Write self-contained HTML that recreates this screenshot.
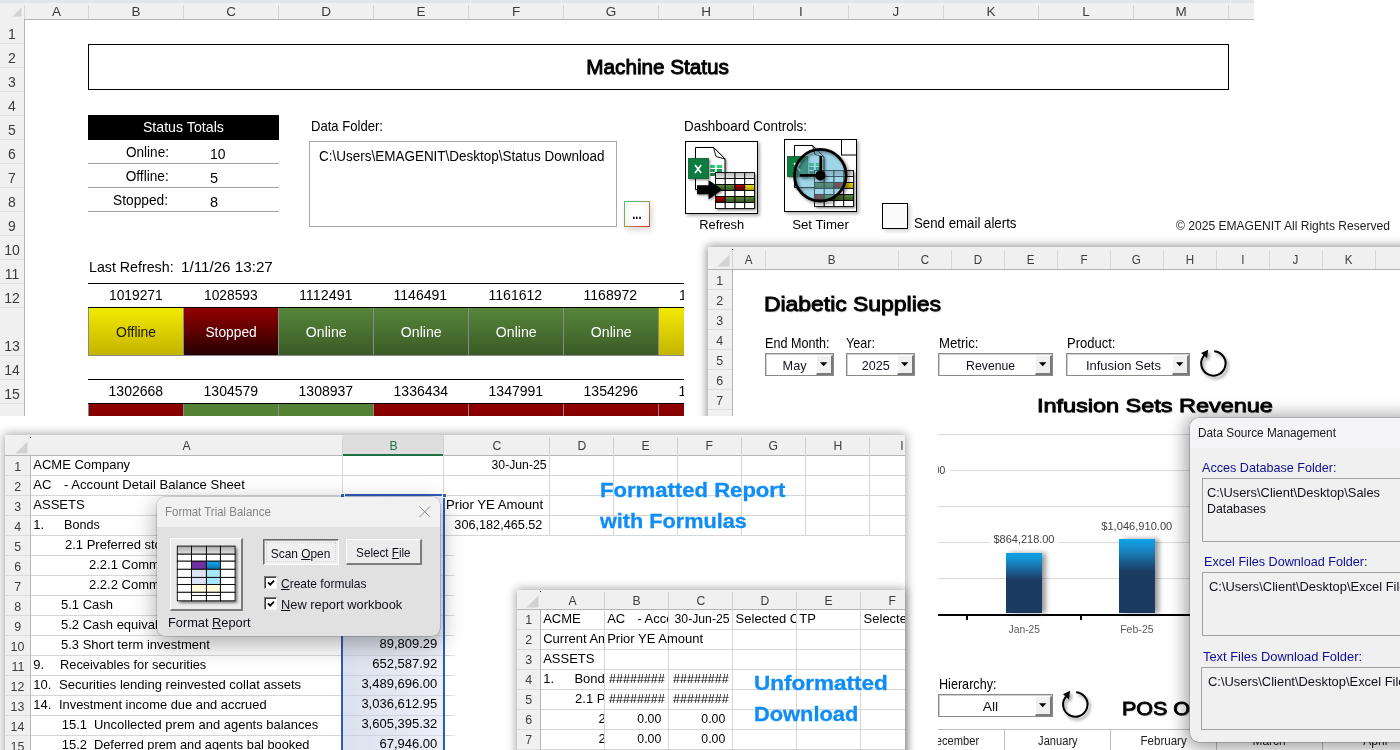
<!DOCTYPE html>
<html><head><meta charset="utf-8"><title>Excel Dashboards</title>
<style>
html,body{margin:0;padding:0;}
body{width:1400px;height:750px;overflow:hidden;background:#fff;position:relative;font-family:"Liberation Sans",sans-serif;}
.r{position:absolute;box-sizing:border-box;}
.t{position:absolute;white-space:pre;font-family:"Liberation Sans",sans-serif;}
svg{position:absolute;overflow:visible;}
</style></head><body>
<!-- p1 -->
<div class="r" style="left:0px;top:0px;width:1400px;height:416px;overflow:hidden;background:#fff;">
<div class="r" style="left:0px;top:0px;width:1254px;height:3px;background:#e2e5e9;"></div>
<div class="r" style="left:0px;top:3px;width:1254px;height:17px;background:#f0f0f0;border-bottom:1px solid #b4b4b4;"></div>
<div class="r" style="left:0px;top:19px;width:25px;height:397px;background:#f0f0f0;border-right:1px solid #b4b4b4;"></div>
<svg style="left:12px;top:7px" width="10" height="10"><polygon points="9.5,0.5 9.5,9.5 0.5,9.5" fill="#d2d2d2"/></svg>
<div class="r" style="left:88px;top:5px;width:1px;height:14px;background:#d4d4d4;"></div>
<div class="t" style="left:52.00px;top:2.76px;height:18px;line-height:18px;font-size:13.5px;color:#3c3c3c;">A</div>
<div class="r" style="left:183px;top:5px;width:1px;height:14px;background:#d4d4d4;"></div>
<div class="t" style="left:131.50px;top:2.76px;height:18px;line-height:18px;font-size:13.5px;color:#3c3c3c;">B</div>
<div class="r" style="left:278px;top:5px;width:1px;height:14px;background:#d4d4d4;"></div>
<div class="t" style="left:226.13px;top:2.76px;height:18px;line-height:18px;font-size:13.5px;color:#3c3c3c;">C</div>
<div class="r" style="left:373px;top:5px;width:1px;height:14px;background:#d4d4d4;"></div>
<div class="t" style="left:321.13px;top:2.76px;height:18px;line-height:18px;font-size:13.5px;color:#3c3c3c;">D</div>
<div class="r" style="left:468px;top:5px;width:1px;height:14px;background:#d4d4d4;"></div>
<div class="t" style="left:416.50px;top:2.76px;height:18px;line-height:18px;font-size:13.5px;color:#3c3c3c;">E</div>
<div class="r" style="left:563px;top:5px;width:1px;height:14px;background:#d4d4d4;"></div>
<div class="t" style="left:511.88px;top:2.76px;height:18px;line-height:18px;font-size:13.5px;color:#3c3c3c;">F</div>
<div class="r" style="left:658px;top:5px;width:1px;height:14px;background:#d4d4d4;"></div>
<div class="t" style="left:605.75px;top:2.76px;height:18px;line-height:18px;font-size:13.5px;color:#3c3c3c;">G</div>
<div class="r" style="left:753px;top:5px;width:1px;height:14px;background:#d4d4d4;"></div>
<div class="t" style="left:701.13px;top:2.76px;height:18px;line-height:18px;font-size:13.5px;color:#3c3c3c;">H</div>
<div class="r" style="left:848px;top:5px;width:1px;height:14px;background:#d4d4d4;"></div>
<div class="t" style="left:799.12px;top:2.76px;height:18px;line-height:18px;font-size:13.5px;color:#3c3c3c;">I</div>
<div class="r" style="left:943px;top:5px;width:1px;height:14px;background:#d4d4d4;"></div>
<div class="t" style="left:892.62px;top:2.76px;height:18px;line-height:18px;font-size:13.5px;color:#3c3c3c;">J</div>
<div class="r" style="left:1038px;top:5px;width:1px;height:14px;background:#d4d4d4;"></div>
<div class="t" style="left:986.50px;top:2.76px;height:18px;line-height:18px;font-size:13.5px;color:#3c3c3c;">K</div>
<div class="r" style="left:1133px;top:5px;width:1px;height:14px;background:#d4d4d4;"></div>
<div class="t" style="left:1082.25px;top:2.76px;height:18px;line-height:18px;font-size:13.5px;color:#3c3c3c;">L</div>
<div class="r" style="left:1228px;top:5px;width:1px;height:14px;background:#d4d4d4;"></div>
<div class="t" style="left:1175.38px;top:2.76px;height:18px;line-height:18px;font-size:13.5px;color:#3c3c3c;">M</div>
<div class="r" style="left:24px;top:5px;width:1px;height:14px;background:#d4d4d4;"></div>
<div class="r" style="left:0px;top:43px;width:24px;height:1px;background:#dcdcdc;"></div>
<div class="t" style="left:8.11px;top:24.66px;height:18px;line-height:18px;font-size:14px;color:#3c3c3c;">1</div>
<div class="r" style="left:0px;top:67px;width:24px;height:1px;background:#dcdcdc;"></div>
<div class="t" style="left:8.11px;top:48.66px;height:18px;line-height:18px;font-size:14px;color:#3c3c3c;">2</div>
<div class="r" style="left:0px;top:91px;width:24px;height:1px;background:#dcdcdc;"></div>
<div class="t" style="left:8.11px;top:72.66px;height:18px;line-height:18px;font-size:14px;color:#3c3c3c;">3</div>
<div class="r" style="left:0px;top:115px;width:24px;height:1px;background:#dcdcdc;"></div>
<div class="t" style="left:8.11px;top:96.66px;height:18px;line-height:18px;font-size:14px;color:#3c3c3c;">4</div>
<div class="r" style="left:0px;top:139px;width:24px;height:1px;background:#dcdcdc;"></div>
<div class="t" style="left:8.11px;top:120.66px;height:18px;line-height:18px;font-size:14px;color:#3c3c3c;">5</div>
<div class="r" style="left:0px;top:163px;width:24px;height:1px;background:#dcdcdc;"></div>
<div class="t" style="left:8.11px;top:144.66px;height:18px;line-height:18px;font-size:14px;color:#3c3c3c;">6</div>
<div class="r" style="left:0px;top:187px;width:24px;height:1px;background:#dcdcdc;"></div>
<div class="t" style="left:8.11px;top:168.66px;height:18px;line-height:18px;font-size:14px;color:#3c3c3c;">7</div>
<div class="r" style="left:0px;top:211px;width:24px;height:1px;background:#dcdcdc;"></div>
<div class="t" style="left:8.11px;top:192.66px;height:18px;line-height:18px;font-size:14px;color:#3c3c3c;">8</div>
<div class="r" style="left:0px;top:235px;width:24px;height:1px;background:#dcdcdc;"></div>
<div class="t" style="left:8.11px;top:216.66px;height:18px;line-height:18px;font-size:14px;color:#3c3c3c;">9</div>
<div class="r" style="left:0px;top:259px;width:24px;height:1px;background:#dcdcdc;"></div>
<div class="t" style="left:4.21px;top:240.66px;height:18px;line-height:18px;font-size:14px;color:#3c3c3c;">10</div>
<div class="r" style="left:0px;top:283px;width:24px;height:1px;background:#dcdcdc;"></div>
<div class="t" style="left:4.73px;top:264.66px;height:18px;line-height:18px;font-size:14px;color:#3c3c3c;">11</div>
<div class="r" style="left:0px;top:307px;width:24px;height:1px;background:#dcdcdc;"></div>
<div class="t" style="left:4.21px;top:288.66px;height:18px;line-height:18px;font-size:14px;color:#3c3c3c;">12</div>
<div class="r" style="left:0px;top:355px;width:24px;height:1px;background:#dcdcdc;"></div>
<div class="t" style="left:4.21px;top:336.66px;height:18px;line-height:18px;font-size:14px;color:#3c3c3c;">13</div>
<div class="r" style="left:0px;top:379px;width:24px;height:1px;background:#dcdcdc;"></div>
<div class="t" style="left:4.21px;top:360.66px;height:18px;line-height:18px;font-size:14px;color:#3c3c3c;">14</div>
<div class="r" style="left:0px;top:403px;width:24px;height:1px;background:#dcdcdc;"></div>
<div class="t" style="left:4.21px;top:384.66px;height:18px;line-height:18px;font-size:14px;color:#3c3c3c;">15</div>
<div class="r" style="left:88px;top:44px;width:1141px;height:46px;border:1px solid #000;"></div>
<div class="t" style="left:587.15px;top:53.44px;height:27px;line-height:27px;font-size:20.5px;color:#000;transform:scaleX(1.0092);transform-origin:50% 50%;-webkit-text-stroke:0.9px #000;text-shadow:0.5px 0.5px 1px rgba(0,0,0,.35);">Machine Status</div>
<div class="r" style="left:88px;top:115px;width:191px;height:25px;background:#000;"></div>
<div class="t" style="left:141.62px;top:117.67px;height:19px;line-height:19px;font-size:14.5px;color:#fff;transform:scaleX(0.9788);transform-origin:50% 50%;">Status Totals</div>
<div class="t" style="left:122.56px;top:142.67px;height:19px;line-height:19px;font-size:14.5px;color:#000;transform:scaleX(0.9359);transform-origin:100% 50%;">Online:</div>
<div class="t" style="left:210.00px;top:144.97px;height:19px;line-height:19px;font-size:14.5px;color:#000;transform:scaleX(0.9610);transform-origin:0 50%;">10</div>
<div class="r" style="left:88px;top:163px;width:191px;height:1px;background:#a0a0a0;"></div>
<div class="t" style="left:122.83px;top:166.67px;height:19px;line-height:19px;font-size:14.5px;color:#000;transform:scaleX(0.9415);transform-origin:100% 50%;">Offline:</div>
<div class="t" style="left:210.00px;top:168.97px;height:19px;line-height:19px;font-size:14.5px;color:#000;">5</div>
<div class="r" style="left:88px;top:187px;width:191px;height:1px;background:#a0a0a0;"></div>
<div class="t" style="left:110.45px;top:190.67px;height:19px;line-height:19px;font-size:14.5px;color:#000;transform:scaleX(0.9474);transform-origin:100% 50%;">Stopped:</div>
<div class="t" style="left:210.00px;top:192.97px;height:19px;line-height:19px;font-size:14.5px;color:#000;">8</div>
<div class="r" style="left:88px;top:211px;width:191px;height:1px;background:#a0a0a0;"></div>
<div class="t" style="left:311.00px;top:117.27px;height:19px;line-height:19px;font-size:14.5px;color:#000;transform:scaleX(0.9024);transform-origin:0 50%;">Data Folder:</div>
<div class="r" style="left:309px;top:141px;width:308px;height:86px;background:#fff;border:1px solid #a8a8a8;"></div>
<div class="t" style="left:319.00px;top:146.66px;height:18px;line-height:18px;font-size:14px;color:#000;transform:scaleX(0.9631);transform-origin:0 50%;">C:\Users\EMAGENIT\Desktop\Status Download</div>
<div class="r" style="left:624px;top:201px;width:26px;height:26px;background:#fbfbfb;box-shadow:2px 3px 6px rgba(0,0,0,.16);background:linear-gradient(135deg,#3ecb85,#a39646 50%,#d63434);"></div>
<div class="r" style="left:625px;top:202px;width:24px;height:24px;background:radial-gradient(ellipse at center,#fff 35%,#f1f1f1 100%);"></div>
<div class="t" style="left:630.87px;top:204.76px;height:18px;line-height:18px;font-size:14px;color:#000;font-weight:bold;transform:scaleX(.8);">...</div>
<div class="t" style="left:684.00px;top:117.27px;height:19px;line-height:19px;font-size:14.5px;color:#000;transform:scaleX(0.9249);transform-origin:0 50%;">Dashboard Controls:</div>
<div class="t" style="left:89.40px;top:257.17px;height:20px;line-height:20px;font-size:15px;color:#000;transform:scaleX(0.9483);transform-origin:0 50%;">Last Refresh:</div>
<div class="t" style="left:180.80px;top:257.17px;height:20px;line-height:20px;font-size:15px;color:#000;transform:scaleX(1.0128);transform-origin:0 50%;">1/11/26 13:27</div>
<div class="r" style="left:88px;top:283px;width:596px;height:1px;background:#000;"></div>
<div class="r" style="left:88px;top:307px;width:596px;height:1px;background:#000;"></div>
<div class="r" style="left:88px;top:379px;width:596px;height:1px;background:#000;"></div>
<div class="r" style="left:88px;top:403px;width:596px;height:1px;background:#000;"></div>
<div class="t" style="left:107.86px;top:286.16px;height:19px;line-height:19px;font-size:14.3px;color:#000;transform:scaleX(0.9628);transform-origin:50% 50%;">1019271</div>
<div class="t" style="left:107.86px;top:382.16px;height:19px;line-height:19px;font-size:14.3px;color:#000;transform:scaleX(0.9807);transform-origin:50% 50%;">1302668</div>
<div class="r" style="left:88px;top:308px;width:95px;height:48px;background:linear-gradient(#f2ea00,#c4b400);border-left:1px solid #8a8a8a;border-bottom:1px solid #8a8a8a;"></div>
<div class="t" style="left:116.20px;top:323.16px;height:18px;line-height:18px;font-size:14px;color:#1a1a00;transform:scaleX(0.9948);transform-origin:50% 50%;">Offline</div>
<div class="r" style="left:88px;top:404px;width:95px;height:12px;background:linear-gradient(#8f0000,#850000);border-left:1px solid #8a8a8a;"></div>
<div class="t" style="left:202.86px;top:286.16px;height:19px;line-height:19px;font-size:14.3px;color:#000;transform:scaleX(0.9628);transform-origin:50% 50%;">1028593</div>
<div class="t" style="left:202.86px;top:382.16px;height:19px;line-height:19px;font-size:14.3px;color:#000;transform:scaleX(0.9807);transform-origin:50% 50%;">1304579</div>
<div class="r" style="left:183px;top:308px;width:95px;height:48px;background:linear-gradient(#8c0000 0%,#8c0000 8%,#260000 100%);border-left:1px solid #8a8a8a;border-bottom:1px solid #8a8a8a;"></div>
<div class="t" style="left:205.22px;top:323.16px;height:18px;line-height:18px;font-size:14px;color:#fff;transform:scaleX(0.9854);transform-origin:50% 50%;">Stopped</div>
<div class="r" style="left:183px;top:404px;width:95px;height:12px;background:#548235;border-left:1px solid #8a8a8a;"></div>
<div class="t" style="left:298.92px;top:286.16px;height:19px;line-height:19px;font-size:14.3px;color:#000;transform:scaleX(1.0009);transform-origin:50% 50%;">1112491</div>
<div class="t" style="left:297.86px;top:382.16px;height:19px;line-height:19px;font-size:14.3px;color:#000;transform:scaleX(0.9807);transform-origin:50% 50%;">1308937</div>
<div class="r" style="left:278px;top:308px;width:95px;height:48px;background:linear-gradient(#56863a,#3b5a27);border-left:1px solid #8a8a8a;border-bottom:1px solid #8a8a8a;"></div>
<div class="t" style="left:306.07px;top:323.16px;height:18px;line-height:18px;font-size:14px;color:#fff;transform:scaleX(1.0082);transform-origin:50% 50%;">Online</div>
<div class="r" style="left:278px;top:404px;width:95px;height:12px;background:#548235;border-left:1px solid #8a8a8a;"></div>
<div class="t" style="left:393.39px;top:286.16px;height:19px;line-height:19px;font-size:14.3px;color:#000;transform:scaleX(0.9815);transform-origin:50% 50%;">1146491</div>
<div class="t" style="left:392.86px;top:382.16px;height:19px;line-height:19px;font-size:14.3px;color:#000;transform:scaleX(0.9807);transform-origin:50% 50%;">1336434</div>
<div class="r" style="left:373px;top:308px;width:95px;height:48px;background:linear-gradient(#56863a,#3b5a27);border-left:1px solid #8a8a8a;border-bottom:1px solid #8a8a8a;"></div>
<div class="t" style="left:401.07px;top:323.16px;height:18px;line-height:18px;font-size:14px;color:#fff;transform:scaleX(1.0082);transform-origin:50% 50%;">Online</div>
<div class="r" style="left:373px;top:404px;width:95px;height:12px;background:linear-gradient(#8f0000,#850000);border-left:1px solid #8a8a8a;"></div>
<div class="t" style="left:488.39px;top:286.16px;height:19px;line-height:19px;font-size:14.3px;color:#000;transform:scaleX(0.9815);transform-origin:50% 50%;">1161612</div>
<div class="t" style="left:487.86px;top:382.16px;height:19px;line-height:19px;font-size:14.3px;color:#000;transform:scaleX(0.9807);transform-origin:50% 50%;">1347991</div>
<div class="r" style="left:468px;top:308px;width:95px;height:48px;background:linear-gradient(#56863a,#3b5a27);border-left:1px solid #8a8a8a;border-bottom:1px solid #8a8a8a;"></div>
<div class="t" style="left:496.07px;top:323.16px;height:18px;line-height:18px;font-size:14px;color:#fff;transform:scaleX(1.0082);transform-origin:50% 50%;">Online</div>
<div class="r" style="left:468px;top:404px;width:95px;height:12px;background:linear-gradient(#8f0000,#850000);border-left:1px solid #8a8a8a;"></div>
<div class="t" style="left:583.39px;top:286.16px;height:19px;line-height:19px;font-size:14.3px;color:#000;transform:scaleX(0.9815);transform-origin:50% 50%;">1168972</div>
<div class="t" style="left:582.86px;top:382.16px;height:19px;line-height:19px;font-size:14.3px;color:#000;transform:scaleX(0.9807);transform-origin:50% 50%;">1354296</div>
<div class="r" style="left:563px;top:308px;width:95px;height:48px;background:linear-gradient(#56863a,#3b5a27);border-left:1px solid #8a8a8a;border-bottom:1px solid #8a8a8a;"></div>
<div class="t" style="left:591.07px;top:323.16px;height:18px;line-height:18px;font-size:14px;color:#fff;transform:scaleX(1.0082);transform-origin:50% 50%;">Online</div>
<div class="r" style="left:563px;top:404px;width:95px;height:12px;background:linear-gradient(#8f0000,#850000);border-left:1px solid #8a8a8a;"></div>
<div class="r" style="left:658px;top:284px;width:26px;height:23px;overflow:hidden;">
<div class="t" style="left:19.86px;top:2.16px;height:19px;line-height:19px;font-size:14.3px;color:#000;transform:scaleX(0.9628);transform-origin:50% 50%;">1019271</div>
</div>
<div class="r" style="left:658px;top:380px;width:26px;height:23px;overflow:hidden;">
<div class="t" style="left:19.86px;top:2.16px;height:19px;line-height:19px;font-size:14.3px;color:#000;transform:scaleX(0.9807);transform-origin:50% 50%;">1302668</div>
</div>
<div class="r" style="left:658px;top:308px;width:26px;height:48px;background:linear-gradient(#f2ea00,#c4b400);border-left:1px solid #8a8a8a;border-bottom:1px solid #8a8a8a;"></div>
<div class="r" style="left:658px;top:404px;width:26px;height:12px;background:linear-gradient(#8f0000,#850000);border-left:1px solid #8a8a8a;"></div>
<div class="r" style="left:685px;top:141px;width:73px;height:73px;background:#fff;border:1px solid #000;box-shadow:2px 2px 3px rgba(0,0,0,.3);"></div>
<svg style="left:685px;top:141px" width="73" height="73" viewBox="0 0 73 73"><defs>
<filter id="sh1" x="-30%" y="-30%" width="170%" height="170%"><feDropShadow dx="1.2" dy="1.2" stdDeviation="1" flood-color="#000" flood-opacity="0.45"/></filter>
<filter id="sh2" x="-30%" y="-30%" width="170%" height="170%"><feDropShadow dx="1.5" dy="1.5" stdDeviation="1.2" flood-color="#000" flood-opacity="0.55"/></filter>
<filter id="sh3" x="-30%" y="-30%" width="170%" height="170%"><feDropShadow dx="2" dy="2" stdDeviation="1.5" flood-color="#000" flood-opacity="0.45"/></filter>
<linearGradient id="gh" x1="0" y1="0" x2="0" y2="1"><stop offset="0" stop-color="#b8b8b8"/><stop offset="1" stop-color="#e8e8e8"/></linearGradient>
<linearGradient id="gg" x1="0" y1="0" x2="0" y2="1"><stop offset="0" stop-color="#5a8a3c"/><stop offset="1" stop-color="#34521f"/></linearGradient>
<linearGradient id="gr" x1="0" y1="0" x2="0" y2="1"><stop offset="0" stop-color="#c00000"/><stop offset="1" stop-color="#500000"/></linearGradient>
<linearGradient id="gy" x1="0" y1="0" x2="0" y2="1"><stop offset="0" stop-color="#f0e400"/><stop offset="1" stop-color="#a89a00"/></linearGradient>
<clipPath id="cb"><rect x="0.5" y="0.5" width="72" height="72"/></clipPath>
</defs><path d="M10.5 6.5 H28.5 L40 18 V48.5 H10.5 Z" fill="#fff" stroke="#000" stroke-width="1" filter="url(#sh1)"/><path d="M28.5 6.5 L31 15.5 L40 18 Z" fill="#fff" stroke="#000" stroke-width="0.9" stroke-linejoin="round"/><rect x="25.3" y="24.0" width="4.6" height="3" fill="#21c872"/><rect x="31.8" y="24.0" width="5.2" height="3" fill="#27d07a"/><rect x="25.3" y="28.0" width="4.6" height="3" fill="#159a55"/><rect x="31.8" y="28.0" width="5.2" height="3" fill="#159a55"/><rect x="25.3" y="32.0" width="4.6" height="3" fill="#0f7a42"/><rect x="31.8" y="32.0" width="5.2" height="3" fill="#0f7a42"/><rect x="3.5" y="17.5" width="20" height="20" fill="#107c41" stroke="#0b5a2f" stroke-width="0.8" filter="url(#sh1)"/><path d="M10 24 L16.2 32 M16.2 24 L10 32" stroke="#fff" stroke-width="1.7" fill="none"/><rect x="30.5" y="31.5" width="39.0" height="36.0" fill="#fff" filter="url(#sh2)"/><rect x="30.50" y="31.50" width="9.75" height="6.0" fill="url(#gh)" stroke="#000" stroke-width="0.9"/><rect x="40.25" y="31.50" width="9.75" height="6.0" fill="url(#gh)" stroke="#000" stroke-width="0.9"/><rect x="50.00" y="31.50" width="9.75" height="6.0" fill="url(#gh)" stroke="#000" stroke-width="0.9"/><rect x="59.75" y="31.50" width="9.75" height="6.0" fill="url(#gh)" stroke="#000" stroke-width="0.9"/><rect x="30.50" y="37.50" width="9.75" height="6.0" fill="#fff" stroke="#000" stroke-width="0.9"/><rect x="40.25" y="37.50" width="9.75" height="6.0" fill="#fff" stroke="#000" stroke-width="0.9"/><rect x="50.00" y="37.50" width="9.75" height="6.0" fill="#fff" stroke="#000" stroke-width="0.9"/><rect x="59.75" y="37.50" width="9.75" height="6.0" fill="#fff" stroke="#000" stroke-width="0.9"/><rect x="30.50" y="43.50" width="9.75" height="6.0" fill="url(#gg)" stroke="#000" stroke-width="0.9"/><rect x="40.25" y="43.50" width="9.75" height="6.0" fill="url(#gg)" stroke="#000" stroke-width="0.9"/><rect x="50.00" y="43.50" width="9.75" height="6.0" fill="url(#gr)" stroke="#000" stroke-width="0.9"/><rect x="59.75" y="43.50" width="9.75" height="6.0" fill="url(#gy)" stroke="#000" stroke-width="0.9"/><rect x="30.50" y="49.50" width="9.75" height="6.0" fill="#fff" stroke="#000" stroke-width="0.9"/><rect x="40.25" y="49.50" width="9.75" height="6.0" fill="#fff" stroke="#000" stroke-width="0.9"/><rect x="50.00" y="49.50" width="9.75" height="6.0" fill="#fff" stroke="#000" stroke-width="0.9"/><rect x="59.75" y="49.50" width="9.75" height="6.0" fill="#fff" stroke="#000" stroke-width="0.9"/><rect x="30.50" y="55.50" width="9.75" height="6.0" fill="url(#gr)" stroke="#000" stroke-width="0.9"/><rect x="40.25" y="55.50" width="9.75" height="6.0" fill="url(#gg)" stroke="#000" stroke-width="0.9"/><rect x="50.00" y="55.50" width="9.75" height="6.0" fill="url(#gg)" stroke="#000" stroke-width="0.9"/><rect x="59.75" y="55.50" width="9.75" height="6.0" fill="url(#gg)" stroke="#000" stroke-width="0.9"/><rect x="30.50" y="61.50" width="9.75" height="6.0" fill="#fff" stroke="#000" stroke-width="0.9"/><rect x="40.25" y="61.50" width="9.75" height="6.0" fill="#fff" stroke="#000" stroke-width="0.9"/><rect x="50.00" y="61.50" width="9.75" height="6.0" fill="#fff" stroke="#000" stroke-width="0.9"/><rect x="59.75" y="61.50" width="9.75" height="6.0" fill="#fff" stroke="#000" stroke-width="0.9"/><path d="M12 44.3 H23.5 V39 L37.2 48.7 L23.5 58.4 V53.2 H12 Z" fill="#000" filter="url(#sh1)"/></svg>
<div class="t" style="left:700.09px;top:216.54px;height:16px;line-height:16px;font-size:12.4px;color:#000;transform:scaleX(1.0364);transform-origin:50% 50%;">Refresh</div>
<div class="r" style="left:784px;top:139px;width:73px;height:73px;background:#fff;border:1px solid #000;box-shadow:2px 2px 3px rgba(0,0,0,.3);"></div>
<svg style="left:784px;top:139px" width="73" height="73" viewBox="0 0 73 73"><g clip-path="url(#cb)"><path d="M10.5 6.5 H28.5 L40 18 V48.5 H10.5 Z" fill="#fff" stroke="#000" stroke-width="1" filter="url(#sh1)"/><path d="M28.5 6.5 L31 15.5 L40 18 Z" fill="#fff" stroke="#000" stroke-width="0.9" stroke-linejoin="round"/><rect x="25.3" y="24.0" width="4.6" height="3" fill="#21c872"/><rect x="31.8" y="24.0" width="5.2" height="3" fill="#27d07a"/><rect x="25.3" y="28.0" width="4.6" height="3" fill="#159a55"/><rect x="31.8" y="28.0" width="5.2" height="3" fill="#159a55"/><rect x="25.3" y="32.0" width="4.6" height="3" fill="#0f7a42"/><rect x="31.8" y="32.0" width="5.2" height="3" fill="#0f7a42"/><rect x="3.5" y="17.5" width="20" height="20" fill="#107c41" stroke="#0b5a2f" stroke-width="0.8" filter="url(#sh1)"/><path d="M10 24 L16.2 32 M16.2 24 L10 32" stroke="#fff" stroke-width="1.7" fill="none"/><rect x="30.5" y="31.5" width="39.0" height="36.0" fill="#fff" filter="url(#sh2)"/><rect x="30.50" y="31.50" width="9.75" height="6.0" fill="url(#gh)" stroke="#000" stroke-width="0.9"/><rect x="40.25" y="31.50" width="9.75" height="6.0" fill="url(#gh)" stroke="#000" stroke-width="0.9"/><rect x="50.00" y="31.50" width="9.75" height="6.0" fill="url(#gh)" stroke="#000" stroke-width="0.9"/><rect x="59.75" y="31.50" width="9.75" height="6.0" fill="url(#gh)" stroke="#000" stroke-width="0.9"/><rect x="30.50" y="37.50" width="9.75" height="6.0" fill="#fff" stroke="#000" stroke-width="0.9"/><rect x="40.25" y="37.50" width="9.75" height="6.0" fill="#fff" stroke="#000" stroke-width="0.9"/><rect x="50.00" y="37.50" width="9.75" height="6.0" fill="#fff" stroke="#000" stroke-width="0.9"/><rect x="59.75" y="37.50" width="9.75" height="6.0" fill="#fff" stroke="#000" stroke-width="0.9"/><rect x="30.50" y="43.50" width="9.75" height="6.0" fill="url(#gg)" stroke="#000" stroke-width="0.9"/><rect x="40.25" y="43.50" width="9.75" height="6.0" fill="url(#gg)" stroke="#000" stroke-width="0.9"/><rect x="50.00" y="43.50" width="9.75" height="6.0" fill="url(#gr)" stroke="#000" stroke-width="0.9"/><rect x="59.75" y="43.50" width="9.75" height="6.0" fill="url(#gy)" stroke="#000" stroke-width="0.9"/><rect x="30.50" y="49.50" width="9.75" height="6.0" fill="#fff" stroke="#000" stroke-width="0.9"/><rect x="40.25" y="49.50" width="9.75" height="6.0" fill="#fff" stroke="#000" stroke-width="0.9"/><rect x="50.00" y="49.50" width="9.75" height="6.0" fill="#fff" stroke="#000" stroke-width="0.9"/><rect x="59.75" y="49.50" width="9.75" height="6.0" fill="#fff" stroke="#000" stroke-width="0.9"/><rect x="30.50" y="55.50" width="9.75" height="6.0" fill="url(#gr)" stroke="#000" stroke-width="0.9"/><rect x="40.25" y="55.50" width="9.75" height="6.0" fill="url(#gg)" stroke="#000" stroke-width="0.9"/><rect x="50.00" y="55.50" width="9.75" height="6.0" fill="url(#gg)" stroke="#000" stroke-width="0.9"/><rect x="59.75" y="55.50" width="9.75" height="6.0" fill="url(#gg)" stroke="#000" stroke-width="0.9"/><rect x="30.50" y="61.50" width="9.75" height="6.0" fill="#fff" stroke="#000" stroke-width="0.9"/><rect x="40.25" y="61.50" width="9.75" height="6.0" fill="#fff" stroke="#000" stroke-width="0.9"/><rect x="50.00" y="61.50" width="9.75" height="6.0" fill="#fff" stroke="#000" stroke-width="0.9"/><rect x="59.75" y="61.50" width="9.75" height="6.0" fill="#fff" stroke="#000" stroke-width="0.9"/></g><circle cx="36.3" cy="36.2" r="25.8" fill="#b4deee" style="mix-blend-mode:multiply"/><circle cx="36.3" cy="36.2" r="25.8" fill="rgba(130,200,225,0.42)"/>
<g filter="url(#sh3)"><circle cx="36.3" cy="36.2" r="25.8" fill="none" stroke="#000" stroke-width="2.8"/>
<path d="M36.7 36.4 V17 M36.4 36.4 H15.7" stroke="#000" stroke-width="2.6" stroke-linecap="butt" fill="none"/>
<circle cx="36.4" cy="36.4" r="5" fill="#000"/></g><rect x="57.5" y="0.5" width="15" height="15.5" fill="#fff" stroke="#000" stroke-width="1"/></svg>
<div class="t" style="left:793.97px;top:216.54px;height:16px;line-height:16px;font-size:12.4px;color:#000;transform:scaleX(1.0705);transform-origin:50% 50%;">Set Timer</div>
<div class="r" style="left:882px;top:203px;width:26px;height:26px;background:#fafafa;border:1px solid #000;box-shadow:2px 2px 4px rgba(0,0,0,.2);"></div>
<div class="t" style="left:914.30px;top:213.86px;height:19px;line-height:19px;font-size:14.3px;color:#000;transform:scaleX(0.9277);transform-origin:0 50%;">Send email alerts</div>
<div class="t" style="left:1176.00px;top:217.64px;height:16px;line-height:16px;font-size:12.3px;color:#1c1c1c;transform:scaleX(0.9815);transform-origin:0 50%;">© 2025 EMAGENIT All Rights Reserved</div>
<!-- p2 -->
<div class="r" style="left:708px;top:247px;width:700px;height:180px;background:#fff;box-shadow:0 0 9px 1px rgba(0,0,0,.45);">
<div class="r" style="left:0px;top:0px;width:700px;height:23px;background:#f0f0f0;border-bottom:1px solid #b4b4b4;"></div>
<div class="r" style="left:0px;top:23px;width:25px;height:160px;background:#f0f0f0;border-right:1px solid #b4b4b4;"></div>
<svg style="left:9px;top:7px" width="13" height="13"><polygon points="12.5,0.5 12.5,12.5 0.5,12.5" fill="#d2d2d2"/></svg>
<div class="r" style="left:24px;top:2px;width:1px;height:1px;background:#000;"></div>
<div class="r" style="left:24px;top:3px;width:1px;height:19px;background:#d4d4d4;"></div>
<div class="r" style="left:57px;top:3px;width:1px;height:19px;background:#d8d8d8;"></div>
<div class="t" style="left:35.70px;top:4.36px;height:18px;line-height:18px;font-size:13.5px;color:#3c3c3c;transform:scaleX(.86);">A</div>
<div class="r" style="left:190px;top:3px;width:1px;height:19px;background:#d8d8d8;"></div>
<div class="t" style="left:118.95px;top:4.36px;height:18px;line-height:18px;font-size:13.5px;color:#3c3c3c;transform:scaleX(.86);">B</div>
<div class="r" style="left:243px;top:3px;width:1px;height:19px;background:#d8d8d8;"></div>
<div class="t" style="left:211.83px;top:4.36px;height:18px;line-height:18px;font-size:13.5px;color:#3c3c3c;transform:scaleX(.86);">C</div>
<div class="r" style="left:296px;top:3px;width:1px;height:19px;background:#d8d8d8;"></div>
<div class="t" style="left:264.83px;top:4.36px;height:18px;line-height:18px;font-size:13.5px;color:#3c3c3c;transform:scaleX(.86);">D</div>
<div class="r" style="left:349px;top:3px;width:1px;height:19px;background:#d8d8d8;"></div>
<div class="t" style="left:318.20px;top:4.36px;height:18px;line-height:18px;font-size:13.5px;color:#3c3c3c;transform:scaleX(.86);">E</div>
<div class="r" style="left:402px;top:3px;width:1px;height:19px;background:#d8d8d8;"></div>
<div class="t" style="left:371.58px;top:4.36px;height:18px;line-height:18px;font-size:13.5px;color:#3c3c3c;transform:scaleX(.86);">F</div>
<div class="r" style="left:455px;top:3px;width:1px;height:19px;background:#d8d8d8;"></div>
<div class="t" style="left:423.45px;top:4.36px;height:18px;line-height:18px;font-size:13.5px;color:#3c3c3c;transform:scaleX(.86);">G</div>
<div class="r" style="left:508px;top:3px;width:1px;height:19px;background:#d8d8d8;"></div>
<div class="t" style="left:476.83px;top:4.36px;height:18px;line-height:18px;font-size:13.5px;color:#3c3c3c;transform:scaleX(.86);">H</div>
<div class="r" style="left:561px;top:3px;width:1px;height:19px;background:#d8d8d8;"></div>
<div class="t" style="left:532.82px;top:4.36px;height:18px;line-height:18px;font-size:13.5px;color:#3c3c3c;transform:scaleX(.86);">I</div>
<div class="r" style="left:614px;top:3px;width:1px;height:19px;background:#d8d8d8;"></div>
<div class="t" style="left:584.33px;top:4.36px;height:18px;line-height:18px;font-size:13.5px;color:#3c3c3c;transform:scaleX(.86);">J</div>
<div class="r" style="left:667px;top:3px;width:1px;height:19px;background:#d8d8d8;"></div>
<div class="t" style="left:636.20px;top:4.36px;height:18px;line-height:18px;font-size:13.5px;color:#3c3c3c;transform:scaleX(.86);">K</div>
<div class="r" style="left:0px;top:42px;width:24px;height:1px;background:#dcdcdc;"></div>
<div class="t" style="left:7.75px;top:24.96px;height:18px;line-height:18px;font-size:13.5px;color:#3c3c3c;transform:scaleX(.92);">1</div>
<div class="r" style="left:0px;top:62px;width:24px;height:1px;background:#dcdcdc;"></div>
<div class="t" style="left:7.75px;top:44.96px;height:18px;line-height:18px;font-size:13.5px;color:#3c3c3c;transform:scaleX(.92);">2</div>
<div class="r" style="left:0px;top:82px;width:24px;height:1px;background:#dcdcdc;"></div>
<div class="t" style="left:7.75px;top:64.96px;height:18px;line-height:18px;font-size:13.5px;color:#3c3c3c;transform:scaleX(.92);">3</div>
<div class="r" style="left:0px;top:102px;width:24px;height:1px;background:#dcdcdc;"></div>
<div class="t" style="left:7.75px;top:84.96px;height:18px;line-height:18px;font-size:13.5px;color:#3c3c3c;transform:scaleX(.92);">4</div>
<div class="r" style="left:0px;top:122px;width:24px;height:1px;background:#dcdcdc;"></div>
<div class="t" style="left:7.75px;top:104.96px;height:18px;line-height:18px;font-size:13.5px;color:#3c3c3c;transform:scaleX(.92);">5</div>
<div class="r" style="left:0px;top:142px;width:24px;height:1px;background:#dcdcdc;"></div>
<div class="t" style="left:7.75px;top:124.96px;height:18px;line-height:18px;font-size:13.5px;color:#3c3c3c;transform:scaleX(.92);">6</div>
<div class="r" style="left:0px;top:162px;width:24px;height:1px;background:#dcdcdc;"></div>
<div class="t" style="left:7.75px;top:144.96px;height:18px;line-height:18px;font-size:13.5px;color:#3c3c3c;transform:scaleX(.92);">7</div>
<div class="r" style="left:0px;top:182px;width:24px;height:1px;background:#dcdcdc;"></div>
<div class="t" style="left:7.75px;top:164.96px;height:18px;line-height:18px;font-size:13.5px;color:#3c3c3c;transform:scaleX(.92);">8</div>
<div class="t" style="left:56.00px;top:44.73px;height:25px;line-height:25px;font-size:19.6px;color:#000;transform:scaleX(1.1687);transform-origin:0 50%;-webkit-text-stroke:0.8px #000;text-shadow:0.6px 0.6px 1px rgba(0,0,0,.45);">Diabetic Supplies</div>
<div class="t" style="left:57.30px;top:87.36px;height:18px;line-height:18px;font-size:14.2px;color:#000;transform:scaleX(0.8881);transform-origin:0 50%;">End Month:</div>
<div class="t" style="left:137.60px;top:87.36px;height:18px;line-height:18px;font-size:14.2px;color:#000;transform:scaleX(0.8885);transform-origin:0 50%;">Year:</div>
<div class="t" style="left:230.50px;top:87.36px;height:18px;line-height:18px;font-size:14.2px;color:#000;transform:scaleX(0.9272);transform-origin:0 50%;">Metric:</div>
<div class="t" style="left:358.60px;top:87.36px;height:18px;line-height:18px;font-size:14.2px;color:#000;transform:scaleX(0.9171);transform-origin:0 50%;">Product:</div>
<div class="r" style="left:57px;top:106px;width:69px;height:23px;background:#fff;border:1px solid #8a8a8a;box-shadow:inset 1px 1px 0 #d0d0d0;"></div>
<div class="r" style="left:108px;top:108px;width:17px;height:20px;background:#f0f0f0;border-top:1px solid #fff;border-left:1px solid #fff;border-right:2px solid #7a7a7a;border-bottom:2px solid #7a7a7a;"></div>
<svg style="left:112.0px;top:115.0px" width="8" height="5"><polygon points="0,0.3 7.4,0.3 3.7,4.3" fill="#000"/></svg>
<div class="t" style="left:73.64px;top:110.05px;height:17px;line-height:17px;font-size:13.3px;color:#101020;transform:scaleX(0.9552);transform-origin:50% 50%;">May</div>
<div class="r" style="left:138px;top:106px;width:69px;height:23px;background:#fff;border:1px solid #8a8a8a;box-shadow:inset 1px 1px 0 #d0d0d0;"></div>
<div class="r" style="left:189px;top:108px;width:17px;height:20px;background:#f0f0f0;border-top:1px solid #fff;border-left:1px solid #fff;border-right:2px solid #7a7a7a;border-bottom:2px solid #7a7a7a;"></div>
<svg style="left:193.0px;top:115.0px" width="8" height="5"><polygon points="0,0.3 7.4,0.3 3.7,4.3" fill="#000"/></svg>
<div class="t" style="left:153.21px;top:110.05px;height:17px;line-height:17px;font-size:13.3px;color:#101020;transform:scaleX(0.9463);transform-origin:50% 50%;">2025</div>
<div class="r" style="left:230px;top:106px;width:115px;height:23px;background:#fff;border:1px solid #8a8a8a;box-shadow:inset 1px 1px 0 #d0d0d0;"></div>
<div class="r" style="left:327px;top:108px;width:17px;height:20px;background:#f0f0f0;border-top:1px solid #fff;border-left:1px solid #fff;border-right:2px solid #7a7a7a;border-bottom:2px solid #7a7a7a;"></div>
<svg style="left:331.0px;top:115.0px" width="8" height="5"><polygon points="0,0.3 7.4,0.3 3.7,4.3" fill="#000"/></svg>
<div class="t" style="left:255.88px;top:110.05px;height:17px;line-height:17px;font-size:13.3px;color:#101020;transform:scaleX(0.9204);transform-origin:50% 50%;">Revenue</div>
<div class="r" style="left:358px;top:106px;width:124px;height:23px;background:#fff;border:1px solid #8a8a8a;box-shadow:inset 1px 1px 0 #d0d0d0;"></div>
<div class="r" style="left:464px;top:108px;width:17px;height:20px;background:#f0f0f0;border-top:1px solid #fff;border-left:1px solid #fff;border-right:2px solid #7a7a7a;border-bottom:2px solid #7a7a7a;"></div>
<svg style="left:468.0px;top:115.0px" width="8" height="5"><polygon points="0,0.3 7.4,0.3 3.7,4.3" fill="#000"/></svg>
<div class="t" style="left:376.55px;top:110.05px;height:17px;line-height:17px;font-size:13.3px;color:#101020;transform:scaleX(0.9754);transform-origin:50% 50%;">Infusion Sets</div>
<svg style="left:0;top:0" width="10" height="10"><g filter="url(#shc)"><path d="M506.25 104.23 A12.2 12.2 0 1 1 496.93 107.62" fill="none" stroke="#000" stroke-width="2.0"/><polygon points="493.07,106.05 499.04,111.06 500.22,102.66" fill="#000"/></g><defs><filter id="shc" x="-40%" y="-40%" width="200%" height="200%"><feDropShadow dx="2" dy="2.5" stdDeviation="1.6" flood-color="#000" flood-opacity="0.4"/></filter></defs></svg>
<div class="t" style="left:329.00px;top:147.21px;height:24px;line-height:24px;font-size:18.2px;color:#000;transform:scaleX(1.2887);transform-origin:0 50%;-webkit-text-stroke:0.8px #000;text-shadow:0.6px 0.6px 1px rgba(0,0,0,.45);">Infusion Sets Revenue</div>
</div>
</div>
<!-- p3 -->
<div class="r" style="left:5px;top:435px;width:900px;height:330px;background:#fff;box-shadow:0 0 9px 1px rgba(0,0,0,.36);overflow:hidden;">
<div class="r" style="left:0px;top:0px;width:900px;height:21px;background:#f0f0f0;border-bottom:1px solid #b4b4b4;"></div>
<div class="r" style="left:0px;top:21px;width:26px;height:320px;background:#f0f0f0;border-right:1px solid #b4b4b4;"></div>
<svg style="left:10px;top:6px" width="13" height="13"><polygon points="12.5,0.5 12.5,12.5 0.5,12.5" fill="#d2d2d2"/></svg>
<div class="r" style="left:25px;top:2px;width:1px;height:1px;background:#000;"></div>
<div class="r" style="left:338px;top:0px;width:101px;height:21px;background:#dedede;border-bottom:2px solid #1e7145;"></div>
<div class="t" style="left:177.00px;top:2.46px;height:18px;line-height:18px;font-size:13.5px;color:#3c3c3c;transform:scaleX(.9);">A</div>
<div class="r" style="left:337px;top:2px;width:1px;height:19px;background:#d0d0d0;"></div>
<div class="t" style="left:383.50px;top:2.46px;height:18px;line-height:18px;font-size:13.5px;color:#1e7145;transform:scaleX(.9);">B</div>
<div class="r" style="left:438px;top:2px;width:1px;height:19px;background:#d0d0d0;"></div>
<div class="t" style="left:486.63px;top:2.46px;height:18px;line-height:18px;font-size:13.5px;color:#3c3c3c;transform:scaleX(.9);">C</div>
<div class="r" style="left:544px;top:2px;width:1px;height:19px;background:#d0d0d0;"></div>
<div class="t" style="left:571.63px;top:2.46px;height:18px;line-height:18px;font-size:13.5px;color:#3c3c3c;transform:scaleX(.9);">D</div>
<div class="r" style="left:608px;top:2px;width:1px;height:19px;background:#d0d0d0;"></div>
<div class="t" style="left:636.00px;top:2.46px;height:18px;line-height:18px;font-size:13.5px;color:#3c3c3c;transform:scaleX(.9);">E</div>
<div class="r" style="left:672px;top:2px;width:1px;height:19px;background:#d0d0d0;"></div>
<div class="t" style="left:700.38px;top:2.46px;height:18px;line-height:18px;font-size:13.5px;color:#3c3c3c;transform:scaleX(.9);">F</div>
<div class="r" style="left:736px;top:2px;width:1px;height:19px;background:#d0d0d0;"></div>
<div class="t" style="left:763.25px;top:2.46px;height:18px;line-height:18px;font-size:13.5px;color:#3c3c3c;transform:scaleX(.9);">G</div>
<div class="r" style="left:800px;top:2px;width:1px;height:19px;background:#d0d0d0;"></div>
<div class="t" style="left:827.63px;top:2.46px;height:18px;line-height:18px;font-size:13.5px;color:#3c3c3c;transform:scaleX(.9);">H</div>
<div class="r" style="left:864px;top:2px;width:1px;height:19px;background:#d0d0d0;"></div>
<div class="t" style="left:894.62px;top:2.46px;height:18px;line-height:18px;font-size:13.5px;color:#3c3c3c;transform:scaleX(.9);">I</div>
<div class="r" style="left:0px;top:40px;width:25px;height:1px;background:#dcdcdc;"></div>
<div class="t" style="left:9.25px;top:23.46px;height:18px;line-height:18px;font-size:13.5px;color:#3c3c3c;transform:scaleX(.92);">1</div>
<div class="r" style="left:26px;top:40px;width:413px;height:1px;background:#d6d6d6;"></div>
<div class="r" style="left:439px;top:40px;width:461px;height:1px;background:#d6d6d6;"></div>
<div class="r" style="left:0px;top:60px;width:25px;height:1px;background:#dcdcdc;"></div>
<div class="t" style="left:9.25px;top:43.46px;height:18px;line-height:18px;font-size:13.5px;color:#3c3c3c;transform:scaleX(.92);">2</div>
<div class="r" style="left:26px;top:60px;width:413px;height:1px;background:#d6d6d6;"></div>
<div class="r" style="left:439px;top:60px;width:461px;height:1px;background:#d6d6d6;"></div>
<div class="r" style="left:0px;top:80px;width:25px;height:1px;background:#dcdcdc;"></div>
<div class="t" style="left:9.25px;top:63.46px;height:18px;line-height:18px;font-size:13.5px;color:#3c3c3c;transform:scaleX(.92);">3</div>
<div class="r" style="left:26px;top:80px;width:413px;height:1px;background:#d6d6d6;"></div>
<div class="r" style="left:439px;top:80px;width:461px;height:1px;background:#d6d6d6;"></div>
<div class="r" style="left:0px;top:100px;width:25px;height:1px;background:#dcdcdc;"></div>
<div class="t" style="left:9.25px;top:83.46px;height:18px;line-height:18px;font-size:13.5px;color:#3c3c3c;transform:scaleX(.92);">4</div>
<div class="r" style="left:26px;top:100px;width:413px;height:1px;background:#d6d6d6;"></div>
<div class="r" style="left:439px;top:100px;width:461px;height:1px;background:#d6d6d6;"></div>
<div class="r" style="left:0px;top:120px;width:25px;height:1px;background:#dcdcdc;"></div>
<div class="t" style="left:9.25px;top:103.46px;height:18px;line-height:18px;font-size:13.5px;color:#3c3c3c;transform:scaleX(.92);">5</div>
<div class="r" style="left:26px;top:120px;width:413px;height:1px;background:#d6d6d6;"></div>
<div class="r" style="left:440px;top:120px;width:10px;height:1px;background:linear-gradient(90deg,#cfcfcf,#e8e8e8);"></div>
<div class="r" style="left:0px;top:140px;width:25px;height:1px;background:#dcdcdc;"></div>
<div class="t" style="left:9.25px;top:123.46px;height:18px;line-height:18px;font-size:13.5px;color:#3c3c3c;transform:scaleX(.92);">6</div>
<div class="r" style="left:26px;top:140px;width:413px;height:1px;background:#d6d6d6;"></div>
<div class="r" style="left:440px;top:140px;width:10px;height:1px;background:linear-gradient(90deg,#cfcfcf,#e8e8e8);"></div>
<div class="r" style="left:0px;top:160px;width:25px;height:1px;background:#dcdcdc;"></div>
<div class="t" style="left:9.25px;top:143.46px;height:18px;line-height:18px;font-size:13.5px;color:#3c3c3c;transform:scaleX(.92);">7</div>
<div class="r" style="left:26px;top:160px;width:413px;height:1px;background:#d6d6d6;"></div>
<div class="r" style="left:440px;top:160px;width:10px;height:1px;background:linear-gradient(90deg,#cfcfcf,#e8e8e8);"></div>
<div class="r" style="left:0px;top:180px;width:25px;height:1px;background:#dcdcdc;"></div>
<div class="t" style="left:9.25px;top:163.46px;height:18px;line-height:18px;font-size:13.5px;color:#3c3c3c;transform:scaleX(.92);">8</div>
<div class="r" style="left:26px;top:180px;width:413px;height:1px;background:#d6d6d6;"></div>
<div class="r" style="left:440px;top:180px;width:10px;height:1px;background:linear-gradient(90deg,#cfcfcf,#e8e8e8);"></div>
<div class="r" style="left:0px;top:200px;width:25px;height:1px;background:#dcdcdc;"></div>
<div class="t" style="left:9.25px;top:183.46px;height:18px;line-height:18px;font-size:13.5px;color:#3c3c3c;transform:scaleX(.92);">9</div>
<div class="r" style="left:26px;top:200px;width:413px;height:1px;background:#d6d6d6;"></div>
<div class="r" style="left:440px;top:200px;width:10px;height:1px;background:linear-gradient(90deg,#cfcfcf,#e8e8e8);"></div>
<div class="r" style="left:0px;top:220px;width:25px;height:1px;background:#dcdcdc;"></div>
<div class="t" style="left:5.49px;top:203.46px;height:18px;line-height:18px;font-size:13.5px;color:#3c3c3c;transform:scaleX(.92);">10</div>
<div class="r" style="left:26px;top:220px;width:413px;height:1px;background:#d6d6d6;"></div>
<div class="r" style="left:440px;top:220px;width:10px;height:1px;background:linear-gradient(90deg,#cfcfcf,#e8e8e8);"></div>
<div class="r" style="left:0px;top:240px;width:25px;height:1px;background:#dcdcdc;"></div>
<div class="t" style="left:5.99px;top:223.46px;height:18px;line-height:18px;font-size:13.5px;color:#3c3c3c;transform:scaleX(.92);">11</div>
<div class="r" style="left:26px;top:240px;width:413px;height:1px;background:#d6d6d6;"></div>
<div class="r" style="left:440px;top:240px;width:10px;height:1px;background:linear-gradient(90deg,#cfcfcf,#e8e8e8);"></div>
<div class="r" style="left:0px;top:260px;width:25px;height:1px;background:#dcdcdc;"></div>
<div class="t" style="left:5.49px;top:243.46px;height:18px;line-height:18px;font-size:13.5px;color:#3c3c3c;transform:scaleX(.92);">12</div>
<div class="r" style="left:26px;top:260px;width:413px;height:1px;background:#d6d6d6;"></div>
<div class="r" style="left:440px;top:260px;width:10px;height:1px;background:linear-gradient(90deg,#cfcfcf,#e8e8e8);"></div>
<div class="r" style="left:0px;top:280px;width:25px;height:1px;background:#dcdcdc;"></div>
<div class="t" style="left:5.49px;top:263.46px;height:18px;line-height:18px;font-size:13.5px;color:#3c3c3c;transform:scaleX(.92);">13</div>
<div class="r" style="left:26px;top:280px;width:413px;height:1px;background:#d6d6d6;"></div>
<div class="r" style="left:440px;top:280px;width:10px;height:1px;background:linear-gradient(90deg,#cfcfcf,#e8e8e8);"></div>
<div class="r" style="left:0px;top:300px;width:25px;height:1px;background:#dcdcdc;"></div>
<div class="t" style="left:5.49px;top:283.46px;height:18px;line-height:18px;font-size:13.5px;color:#3c3c3c;transform:scaleX(.92);">14</div>
<div class="r" style="left:26px;top:300px;width:413px;height:1px;background:#d6d6d6;"></div>
<div class="r" style="left:440px;top:300px;width:10px;height:1px;background:linear-gradient(90deg,#cfcfcf,#e8e8e8);"></div>
<div class="r" style="left:0px;top:320px;width:25px;height:1px;background:#dcdcdc;"></div>
<div class="t" style="left:5.49px;top:303.46px;height:18px;line-height:18px;font-size:13.5px;color:#3c3c3c;transform:scaleX(.92);">15</div>
<div class="r" style="left:26px;top:320px;width:413px;height:1px;background:#d6d6d6;"></div>
<div class="r" style="left:440px;top:320px;width:10px;height:1px;background:linear-gradient(90deg,#cfcfcf,#e8e8e8);"></div>
<div class="r" style="left:0px;top:340px;width:25px;height:1px;background:#dcdcdc;"></div>
<div class="t" style="left:5.49px;top:323.46px;height:18px;line-height:18px;font-size:13.5px;color:#3c3c3c;transform:scaleX(.92);">16</div>
<div class="r" style="left:26px;top:340px;width:413px;height:1px;background:#d6d6d6;"></div>
<div class="r" style="left:440px;top:340px;width:10px;height:1px;background:linear-gradient(90deg,#cfcfcf,#e8e8e8);"></div>
<div class="r" style="left:337px;top:20px;width:1px;height:300px;background:#d6d6d6;"></div>
<div class="r" style="left:438px;top:20px;width:1px;height:81px;background:#d6d6d6;"></div>
<div class="r" style="left:544px;top:20px;width:1px;height:81px;background:#d6d6d6;"></div>
<div class="r" style="left:608px;top:20px;width:1px;height:81px;background:#d6d6d6;"></div>
<div class="r" style="left:672px;top:20px;width:1px;height:81px;background:#d6d6d6;"></div>
<div class="r" style="left:736px;top:20px;width:1px;height:81px;background:#d6d6d6;"></div>
<div class="r" style="left:800px;top:20px;width:1px;height:81px;background:#d6d6d6;"></div>
<div class="r" style="left:864px;top:20px;width:1px;height:81px;background:#d6d6d6;"></div>
<div class="r" style="left:338px;top:61px;width:100px;height:260px;background:linear-gradient(90deg,rgba(190,200,225,.55),rgba(215,222,240,.45));"></div>
<div class="r" style="left:336px;top:59px;width:104px;height:2px;background:#2f5cb8;"></div>
<div class="r" style="left:336px;top:59px;width:2px;height:260px;background:#2f5cb8;"></div>
<div class="r" style="left:438px;top:59px;width:2px;height:260px;background:#2f5cb8;"></div>
<div class="r" style="left:334.5px;top:57.5px;width:5px;height:5px;background:#2f5cb8;border:0.5px solid #fff;"></div>
<div class="r" style="left:436.5px;top:57.5px;width:5px;height:5px;background:#2f5cb8;border:0.5px solid #fff;"></div>
<div class="t" style="left:28.30px;top:20.55px;height:18px;line-height:18px;font-size:13px;color:#000;">ACME Company</div>
<div class="t" style="left:28.30px;top:40.55px;height:18px;line-height:18px;font-size:13px;color:#000;">AC</div>
<div class="t" style="left:28.30px;top:60.55px;height:18px;line-height:18px;font-size:13px;color:#000;">ASSETS</div>
<div class="t" style="left:28.30px;top:80.55px;height:18px;line-height:18px;font-size:13px;color:#000;">1.</div>
<div class="t" style="left:60.00px;top:100.55px;height:18px;line-height:18px;font-size:13px;color:#000;">2.1 Preferred stock</div>
<div class="t" style="left:84.00px;top:120.55px;height:18px;line-height:18px;font-size:13px;color:#000;">2.2.1 Common</div>
<div class="t" style="left:84.00px;top:140.55px;height:18px;line-height:18px;font-size:13px;color:#000;">2.2.2 Common</div>
<div class="t" style="left:56.00px;top:160.55px;height:18px;line-height:18px;font-size:13px;color:#000;">5.1 Cash</div>
<div class="t" style="left:56.00px;top:180.55px;height:18px;line-height:18px;font-size:13px;color:#000;">5.2 Cash equivalents</div>
<div class="t" style="left:56.00px;top:200.55px;height:18px;line-height:18px;font-size:13px;color:#000;">5.3 Short term investment</div>
<div class="t" style="left:28.30px;top:220.55px;height:18px;line-height:18px;font-size:13px;color:#000;">9.</div>
<div class="t" style="left:28.30px;top:240.55px;height:18px;line-height:18px;font-size:13px;color:#000;">10.</div>
<div class="t" style="left:28.30px;top:260.55px;height:18px;line-height:18px;font-size:13px;color:#000;">14.</div>
<div class="t" style="left:56.80px;top:280.55px;height:18px;line-height:18px;font-size:13px;color:#000;">15.1</div>
<div class="t" style="left:56.80px;top:300.55px;height:18px;line-height:18px;font-size:13px;color:#000;">15.2</div>
<div class="t" style="left:59.40px;top:80.55px;height:18px;line-height:18px;font-size:13px;color:#000;transform:scaleX(0.9685);transform-origin:0 50%;">Bonds</div>
<div class="t" style="left:58.60px;top:40.55px;height:18px;line-height:18px;font-size:13px;color:#000;transform:scaleX(1.0088);transform-origin:0 50%;">- Account Detail Balance Sheet</div>
<div class="t" style="left:54.90px;top:220.55px;height:18px;line-height:18px;font-size:13px;color:#000;transform:scaleX(0.9877);transform-origin:0 50%;">Receivables for securities</div>
<div class="t" style="left:54.30px;top:240.55px;height:18px;line-height:18px;font-size:13px;color:#000;transform:scaleX(1.0031);transform-origin:0 50%;">Securities lending reinvested collat assets</div>
<div class="t" style="left:54.30px;top:260.55px;height:18px;line-height:18px;font-size:13px;color:#000;transform:scaleX(0.9906);transform-origin:0 50%;">Investment income due and accrued</div>
<div class="t" style="left:88.90px;top:280.55px;height:18px;line-height:18px;font-size:13px;color:#000;transform:scaleX(0.9975);transform-origin:0 50%;">Uncollected prem and agents balances</div>
<div class="t" style="left:88.90px;top:300.55px;height:18px;line-height:18px;font-size:13px;color:#000;transform:scaleX(0.9836);transform-origin:0 50%;">Deferred prem and agents bal booked</div>
<div class="t" style="left:374.47px;top:200.15px;height:18px;line-height:18px;font-size:13px;color:#000;">89,809.29</div>
<div class="t" style="left:367.24px;top:220.15px;height:18px;line-height:18px;font-size:13px;color:#000;">652,587.92</div>
<div class="t" style="left:356.39px;top:240.15px;height:18px;line-height:18px;font-size:13px;color:#000;">3,489,696.00</div>
<div class="t" style="left:356.39px;top:260.15px;height:18px;line-height:18px;font-size:13px;color:#000;">3,036,612.95</div>
<div class="t" style="left:356.39px;top:280.15px;height:18px;line-height:18px;font-size:13px;color:#000;">3,605,395.32</div>
<div class="t" style="left:374.47px;top:300.15px;height:18px;line-height:18px;font-size:13px;color:#000;">67,946.00</div>
<div class="t" style="left:482.86px;top:20.55px;height:18px;line-height:18px;font-size:13px;color:#000;transform:scaleX(0.9395);transform-origin:100% 50%;">30-Jun-25</div>
<div class="t" style="left:441.30px;top:60.55px;height:18px;line-height:18px;font-size:13px;color:#000;transform:scaleX(1.0129);transform-origin:0 50%;">Prior YE Amount</div>
<div class="t" style="left:446.93px;top:80.55px;height:18px;line-height:18px;font-size:13px;color:#000;transform:scaleX(0.9738);transform-origin:100% 50%;">306,182,465.52</div>
<div class="t" style="left:595.20px;top:42.13px;height:26px;line-height:26px;font-size:19.8px;color:#0f8df5;font-weight:bold;transform:scaleX(1.1167);transform-origin:0 50%;-webkit-text-stroke:0.3px #0f8df5;">Formatted Report</div>
<div class="t" style="left:595.20px;top:72.83px;height:26px;line-height:26px;font-size:19.8px;color:#0f8df5;font-weight:bold;transform:scaleX(1.0953);transform-origin:0 50%;-webkit-text-stroke:0.3px #0f8df5;">with Formulas</div>
</div>
<!-- p4 -->
<div class="r" style="left:157px;top:497px;width:283px;height:139px;background:#e1e1e1;border-radius:8px;box-shadow:0 7px 22px 2px rgba(0,0,0,.30),0 0 0 0.5px rgba(0,0,0,.28);overflow:hidden;">
<div class="r" style="left:0px;top:0px;width:283px;height:30px;background:#f1f1f1;"></div>
<div class="t" style="left:8.40px;top:6.84px;height:16px;line-height:16px;font-size:12.3px;color:#848484;transform:scaleX(0.9323);transform-origin:0 50%;">Format Trial Balance</div>
<svg style="left:261.5px;top:8.5px" width="12" height="12"><path d="M0.5 0.5 L11 11 M11 0.5 L0.5 11" stroke="#8a8a8a" stroke-width="1" fill="none"/></svg>
<div class="r" style="left:13px;top:41px;width:73px;height:73px;background:#ececec;border-top:1px solid #fff;border-left:1px solid #fff;border-right:2px solid #7c7c7c;border-bottom:2px solid #7c7c7c;"></div>
<svg style="left:0;top:0" width="283" height="139"><defs><filter id="sht" x="-30%" y="-30%" width="170%" height="170%"><feDropShadow dx="2" dy="2" stdDeviation="1.6" flood-color="#000" flood-opacity="0.55"/></filter><linearGradient id="th" x1="0" y1="0" x2="0" y2="1"><stop offset="0" stop-color="#a8a8a8"/><stop offset="1" stop-color="#e4e4e4"/></linearGradient><linearGradient id="tb" x1="0" y1="0" x2="0" y2="1"><stop offset="0" stop-color="#12aeee"/><stop offset="1" stop-color="#0a6cae"/></linearGradient></defs><rect x="20.30000000000001" y="49.10000000000002" width="57.8" height="54.7" fill="#fff" filter="url(#sht)"/><rect x="20.3" y="49.1" width="14.2" height="8.1" fill="url(#th)" stroke="#000" stroke-width="0.9"/><rect x="34.5" y="49.1" width="14.9" height="8.1" fill="url(#th)" stroke="#000" stroke-width="0.9"/><rect x="49.4" y="49.1" width="14.0" height="8.1" fill="url(#th)" stroke="#000" stroke-width="0.9"/><rect x="63.4" y="49.1" width="14.7" height="8.1" fill="url(#th)" stroke="#000" stroke-width="0.9"/><rect x="20.3" y="57.2" width="14.2" height="7.0" fill="#fff" stroke="#000" stroke-width="0.9"/><rect x="34.5" y="57.2" width="14.9" height="7.0" fill="#fff" stroke="#000" stroke-width="0.9"/><rect x="49.4" y="57.2" width="14.0" height="7.0" fill="#fff" stroke="#000" stroke-width="0.9"/><rect x="63.4" y="57.2" width="14.7" height="7.0" fill="#fff" stroke="#000" stroke-width="0.9"/><rect x="20.3" y="64.2" width="14.2" height="8.1" fill="#fff" stroke="#000" stroke-width="0.9"/><rect x="34.5" y="64.2" width="14.9" height="8.1" fill="#7030a0" stroke="#000" stroke-width="0.9"/><rect x="49.4" y="64.2" width="14.0" height="8.1" fill="url(#tb)" stroke="#000" stroke-width="0.9"/><rect x="63.4" y="64.2" width="14.7" height="8.1" fill="#fff" stroke="#000" stroke-width="0.9"/><rect x="20.3" y="72.3" width="14.2" height="8.1" fill="#fff" stroke="#000" stroke-width="0.9"/><rect x="34.5" y="72.3" width="14.9" height="8.1" fill="#dce3f4" stroke="#000" stroke-width="0.9"/><rect x="49.4" y="72.3" width="14.0" height="8.1" fill="#a6e6f8" stroke="#000" stroke-width="0.9"/><rect x="63.4" y="72.3" width="14.7" height="8.1" fill="#fff" stroke="#000" stroke-width="0.9"/><rect x="20.3" y="80.4" width="14.2" height="7.1" fill="#fff" stroke="#000" stroke-width="0.9"/><rect x="34.5" y="80.4" width="14.9" height="7.1" fill="#dce3f4" stroke="#000" stroke-width="0.9"/><rect x="49.4" y="80.4" width="14.0" height="7.1" fill="#a6e6f8" stroke="#000" stroke-width="0.9"/><rect x="63.4" y="80.4" width="14.7" height="7.1" fill="#fff" stroke="#000" stroke-width="0.9"/><rect x="20.3" y="87.5" width="14.2" height="7.8" fill="#fff" stroke="#000" stroke-width="0.9"/><rect x="34.5" y="87.5" width="14.9" height="7.8" fill="#fffbdc" stroke="#000" stroke-width="0.9"/><rect x="49.4" y="87.5" width="14.0" height="7.8" fill="#fffbdc" stroke="#000" stroke-width="0.9"/><rect x="63.4" y="87.5" width="14.7" height="7.8" fill="#fff" stroke="#000" stroke-width="0.9"/><rect x="20.3" y="95.3" width="14.2" height="8.5" fill="#fff" stroke="#000" stroke-width="0.9"/><rect x="34.5" y="95.3" width="14.9" height="8.5" fill="#fff" stroke="#000" stroke-width="0.9"/><rect x="49.4" y="95.3" width="14.0" height="8.5" fill="#fff" stroke="#000" stroke-width="0.9"/><rect x="63.4" y="95.3" width="14.7" height="8.5" fill="#fff" stroke="#000" stroke-width="0.9"/><path d="M34.5 98.5 H63.4" stroke="#000" stroke-width="0.9"/></svg>
<div class="t" style="left:10.70px;top:117.45px;height:17px;line-height:17px;font-size:13px;color:#10101c;transform:scaleX(0.9844);transform-origin:0 50%;">Format <u>R</u>eport</div>
<div class="r" style="left:106px;top:42px;width:76px;height:26px;background:#f0f0f0;border-top:1px solid #6a6a6a;border-left:1px solid #6a6a6a;border-right:1px solid #fff;border-bottom:1px solid #fff;box-shadow:inset 1px 1px 0 #a0a0a0;"></div>
<div class="r" style="left:109px;top:45px;width:70px;height:20px;border:1px dotted #d4d4d4;"></div>
<div class="r" style="left:189px;top:42px;width:76px;height:26px;background:#ececec;border-top:1px solid #fff;border-left:1px solid #fff;border-right:2px solid #7c7c7c;border-bottom:2px solid #7c7c7c;"></div>
<div class="t" style="left:111.18px;top:48.05px;height:17px;line-height:17px;font-size:13px;color:#10101c;transform:scaleX(0.9147);transform-origin:50% 50%;">Scan <u>O</u>pen</div>
<div class="t" style="left:196.05px;top:47.05px;height:17px;line-height:17px;font-size:13px;color:#10101c;transform:scaleX(0.8980);transform-origin:50% 50%;">Select <u>F</u>ile</div>
<div class="r" style="left:107px;top:79px;width:12.5px;height:12.5px;background:#fff;border-top:1px solid #7a7a7a;border-left:1px solid #7a7a7a;border-right:1px solid #f4f4f4;border-bottom:1px solid #f4f4f4;box-shadow:inset 1px 1px 0 #404040;"></div>
<svg style="left:109.5px;top:81.5px" width="9" height="9"><path d="M1 3.4 L3.2 5.6 L7 1.6" stroke="#000" stroke-width="1.8" fill="none"/></svg>
<div class="r" style="left:107px;top:100px;width:12.5px;height:12.5px;background:#fff;border-top:1px solid #7a7a7a;border-left:1px solid #7a7a7a;border-right:1px solid #f4f4f4;border-bottom:1px solid #f4f4f4;box-shadow:inset 1px 1px 0 #404040;"></div>
<svg style="left:109.5px;top:102.5px" width="9" height="9"><path d="M1 3.4 L3.2 5.6 L7 1.6" stroke="#000" stroke-width="1.8" fill="none"/></svg>
<div class="t" style="left:124.00px;top:78.25px;height:17px;line-height:17px;font-size:13px;color:#10101c;transform:scaleX(0.9234);transform-origin:0 50%;"><u>C</u>reate formulas</div>
<div class="t" style="left:124.00px;top:99.05px;height:17px;line-height:17px;font-size:13px;color:#10101c;transform:scaleX(0.9867);transform-origin:0 50%;"><u>N</u>ew report workbook</div>
</div>
<div class="r" style="left:517px;top:590px;width:388px;height:170px;background:#fff;box-shadow:0 0 9px 1px rgba(0,0,0,.36);overflow:hidden;">
<div class="r" style="left:0px;top:0px;width:388px;height:20px;background:#f0f0f0;border-bottom:1px solid #b4b4b4;"></div>
<div class="r" style="left:0px;top:20px;width:24px;height:160px;background:#f0f0f0;border-right:1px solid #b4b4b4;"></div>
<svg style="left:9px;top:5px" width="13" height="13"><polygon points="12.5,0.5 12.5,12.5 0.5,12.5" fill="#d2d2d2"/></svg>
<div class="r" style="left:23px;top:1px;width:1px;height:1px;background:#000;"></div>
<div class="r" style="left:87px;top:2px;width:1px;height:18px;background:#d0d0d0;"></div>
<div class="t" style="left:51.00px;top:2.16px;height:18px;line-height:18px;font-size:13.5px;color:#3c3c3c;transform:scaleX(.9);">A</div>
<div class="r" style="left:151px;top:2px;width:1px;height:18px;background:#d0d0d0;"></div>
<div class="t" style="left:115.00px;top:2.16px;height:18px;line-height:18px;font-size:13.5px;color:#3c3c3c;transform:scaleX(.9);">B</div>
<div class="r" style="left:215px;top:2px;width:1px;height:18px;background:#d0d0d0;"></div>
<div class="t" style="left:178.63px;top:2.16px;height:18px;line-height:18px;font-size:13.5px;color:#3c3c3c;transform:scaleX(.9);">C</div>
<div class="r" style="left:279px;top:2px;width:1px;height:18px;background:#d0d0d0;"></div>
<div class="t" style="left:242.63px;top:2.16px;height:18px;line-height:18px;font-size:13.5px;color:#3c3c3c;transform:scaleX(.9);">D</div>
<div class="r" style="left:343px;top:2px;width:1px;height:18px;background:#d0d0d0;"></div>
<div class="t" style="left:307.00px;top:2.16px;height:18px;line-height:18px;font-size:13.5px;color:#3c3c3c;transform:scaleX(.9);">E</div>
<div class="r" style="left:407px;top:2px;width:1px;height:18px;background:#d0d0d0;"></div>
<div class="t" style="left:371.38px;top:2.16px;height:18px;line-height:18px;font-size:13.5px;color:#3c3c3c;transform:scaleX(.9);">F</div>
<div class="r" style="left:0px;top:39px;width:23px;height:1px;background:#dcdcdc;"></div>
<div class="t" style="left:8.25px;top:21.36px;height:18px;line-height:18px;font-size:13.5px;color:#3c3c3c;transform:scaleX(.92);">1</div>
<div class="r" style="left:24px;top:39px;width:370px;height:1px;background:#d6d6d6;"></div>
<div class="r" style="left:0px;top:59px;width:23px;height:1px;background:#dcdcdc;"></div>
<div class="t" style="left:8.25px;top:41.36px;height:18px;line-height:18px;font-size:13.5px;color:#3c3c3c;transform:scaleX(.92);">2</div>
<div class="r" style="left:24px;top:59px;width:370px;height:1px;background:#d6d6d6;"></div>
<div class="r" style="left:0px;top:79px;width:23px;height:1px;background:#dcdcdc;"></div>
<div class="t" style="left:8.25px;top:61.36px;height:18px;line-height:18px;font-size:13.5px;color:#3c3c3c;transform:scaleX(.92);">3</div>
<div class="r" style="left:24px;top:79px;width:370px;height:1px;background:#d6d6d6;"></div>
<div class="r" style="left:0px;top:99px;width:23px;height:1px;background:#dcdcdc;"></div>
<div class="t" style="left:8.25px;top:81.36px;height:18px;line-height:18px;font-size:13.5px;color:#3c3c3c;transform:scaleX(.92);">4</div>
<div class="r" style="left:24px;top:99px;width:370px;height:1px;background:#d6d6d6;"></div>
<div class="r" style="left:0px;top:119px;width:23px;height:1px;background:#dcdcdc;"></div>
<div class="t" style="left:8.25px;top:101.36px;height:18px;line-height:18px;font-size:13.5px;color:#3c3c3c;transform:scaleX(.92);">5</div>
<div class="r" style="left:24px;top:119px;width:370px;height:1px;background:#d6d6d6;"></div>
<div class="r" style="left:0px;top:139px;width:23px;height:1px;background:#dcdcdc;"></div>
<div class="t" style="left:8.25px;top:121.36px;height:18px;line-height:18px;font-size:13.5px;color:#3c3c3c;transform:scaleX(.92);">6</div>
<div class="r" style="left:24px;top:139px;width:370px;height:1px;background:#d6d6d6;"></div>
<div class="r" style="left:0px;top:159px;width:23px;height:1px;background:#dcdcdc;"></div>
<div class="t" style="left:8.25px;top:141.36px;height:18px;line-height:18px;font-size:13.5px;color:#3c3c3c;transform:scaleX(.92);">7</div>
<div class="r" style="left:24px;top:159px;width:370px;height:1px;background:#d6d6d6;"></div>
<div class="r" style="left:0px;top:179px;width:23px;height:1px;background:#dcdcdc;"></div>
<div class="t" style="left:8.25px;top:161.36px;height:18px;line-height:18px;font-size:13.5px;color:#3c3c3c;transform:scaleX(.92);">8</div>
<div class="r" style="left:24px;top:179px;width:370px;height:1px;background:#d6d6d6;"></div>
<div class="r" style="left:87px;top:19px;width:1px;height:150px;background:#d6d6d6;"></div>
<div class="r" style="left:151px;top:19px;width:1px;height:150px;background:#d6d6d6;"></div>
<div class="r" style="left:215px;top:19px;width:1px;height:150px;background:#d6d6d6;"></div>
<div class="r" style="left:279px;top:19px;width:1px;height:150px;background:#d6d6d6;"></div>
<div class="r" style="left:343px;top:19px;width:1px;height:150px;background:#d6d6d6;"></div>
<div class="r" style="left:407px;top:19px;width:1px;height:150px;background:#d6d6d6;"></div>
<div class="r" style="left:24px;top:20px;width:63px;height:19px;overflow:hidden;"><div class="t" style="left:2.2px;top:0.2px;font-size:13px;line-height:18px;">ACME</div></div>
<div class="r" style="left:88px;top:20px;width:63px;height:19px;overflow:hidden;"><div class="t" style="left:2.2px;top:0.2px;font-size:13px;line-height:18px;">AC</div><div class="t" style="left:32.4px;top:0.2px;font-size:13px;line-height:18px;">- Account</div></div>
<div class="r" style="left:152px;top:20px;width:63px;height:19px;overflow:hidden;"><div class="t" style="right:2.6px;top:0.2px;font-size:13px;line-height:18px;transform:scaleX(0.9395);transform-origin:100% 50%;">30-Jun-25</div></div>
<div class="r" style="left:216px;top:20px;width:63px;height:19px;overflow:hidden;"><div class="t" style="left:2.6px;top:0.2px;font-size:13px;line-height:18px;">Selected Company</div></div>
<div class="r" style="left:280px;top:20px;width:63px;height:19px;overflow:hidden;"><div class="t" style="left:2.2px;top:0.2px;font-size:13px;line-height:18px;">TP</div></div>
<div class="r" style="left:344px;top:20px;width:63px;height:19px;overflow:hidden;"><div class="t" style="left:2.6px;top:0.2px;font-size:13px;line-height:18px;">Selected</div></div>
<div class="r" style="left:24px;top:40px;width:63px;height:19px;overflow:hidden;"><div class="t" style="left:2.2px;top:0.2px;font-size:13px;line-height:18px;">Current Amount</div></div>
<div class="r" style="left:88px;top:40px;width:127px;height:19px;overflow:hidden;"><div class="t" style="left:2.2px;top:0.2px;font-size:13px;line-height:18px;">Prior YE Amount</div></div>
<div class="r" style="left:24px;top:60px;width:63px;height:19px;overflow:hidden;"><div class="t" style="left:2.2px;top:0.2px;font-size:13px;line-height:18px;">ASSETS</div></div>
<div class="r" style="left:24px;top:80px;width:63px;height:19px;overflow:hidden;"><div class="t" style="left:2.2px;top:0.2px;font-size:13px;line-height:18px;">1.</div><div class="t" style="left:33.4px;top:0.2px;font-size:13px;line-height:18px;">Bonds</div></div>
<div class="r" style="left:88px;top:80px;width:63px;height:19px;overflow:hidden;"><div class="t" style="left:4.2px;top:0.2px;font-size:13px;line-height:18px;transform:scaleX(0.9647);transform-origin:0 50%;">########</div></div>
<div class="r" style="left:152px;top:80px;width:63px;height:19px;overflow:hidden;"><div class="t" style="left:4.2px;top:0.2px;font-size:13px;line-height:18px;transform:scaleX(0.9647);transform-origin:0 50%;">########</div></div>
<div class="r" style="left:24px;top:100px;width:63px;height:19px;overflow:hidden;"><div class="t" style="left:34.1px;top:0.2px;font-size:13px;line-height:18px;">2.1 Preferred</div></div>
<div class="r" style="left:88px;top:100px;width:63px;height:19px;overflow:hidden;"><div class="t" style="left:4.2px;top:0.2px;font-size:13px;line-height:18px;transform:scaleX(0.9647);transform-origin:0 50%;">########</div></div>
<div class="r" style="left:152px;top:100px;width:63px;height:19px;overflow:hidden;"><div class="t" style="left:4.2px;top:0.2px;font-size:13px;line-height:18px;transform:scaleX(0.9647);transform-origin:0 50%;">########</div></div>
<div class="r" style="left:24px;top:120px;width:63px;height:19px;overflow:hidden;"><div class="t" style="left:57.6px;top:0.2px;font-size:13px;line-height:18px;">2.2.1</div></div>
<div class="r" style="left:88px;top:120px;width:63px;height:19px;overflow:hidden;"><div class="t" style="right:6.8px;top:0.2px;font-size:13px;line-height:18px;transform:scaleX(0.9485);transform-origin:100% 50%;">0.00</div></div>
<div class="r" style="left:152px;top:120px;width:63px;height:19px;overflow:hidden;"><div class="t" style="right:6.8px;top:0.2px;font-size:13px;line-height:18px;transform:scaleX(0.9485);transform-origin:100% 50%;">0.00</div></div>
<div class="r" style="left:24px;top:140px;width:63px;height:19px;overflow:hidden;"><div class="t" style="left:57.6px;top:0.2px;font-size:13px;line-height:18px;">2.2.2</div></div>
<div class="r" style="left:88px;top:140px;width:63px;height:19px;overflow:hidden;"><div class="t" style="right:6.8px;top:0.2px;font-size:13px;line-height:18px;transform:scaleX(0.9485);transform-origin:100% 50%;">0.00</div></div>
<div class="r" style="left:152px;top:140px;width:63px;height:19px;overflow:hidden;"><div class="t" style="right:6.8px;top:0.2px;font-size:13px;line-height:18px;transform:scaleX(0.9485);transform-origin:100% 50%;">0.00</div></div>
<div class="t" style="left:236.60px;top:80.23px;height:26px;line-height:26px;font-size:19.8px;color:#0f8df5;font-weight:bold;transform:scaleX(1.1385);transform-origin:0 50%;-webkit-text-stroke:0.3px #0f8df5;">Unformatted</div>
<div class="t" style="left:236.60px;top:111.43px;height:26px;line-height:26px;font-size:19.8px;color:#0f8df5;font-weight:bold;transform:scaleX(1.1037);transform-origin:0 50%;-webkit-text-stroke:0.3px #0f8df5;">Download</div>
</div>
<!-- p5 -->
<div class="r" style="left:938px;top:418px;width:462px;height:332px;background:#fff;overflow:hidden;">
<div class="r" style="left:0px;top:16px;width:300px;height:1px;background:#d9d9d9;"></div>
<div class="r" style="left:12px;top:52px;width:300px;height:1px;background:#d9d9d9;"></div>
<div class="r" style="left:0px;top:88px;width:300px;height:1px;background:#d9d9d9;"></div>
<div class="r" style="left:0px;top:124px;width:300px;height:1px;background:#d9d9d9;"></div>
<div class="r" style="left:0px;top:160px;width:300px;height:1px;background:#d9d9d9;"></div>
<div class="t" style="left:-4.17px;top:46.12px;height:14px;line-height:14px;font-size:10.4px;color:#404040;">00</div>
<div class="r" style="left:0px;top:195.5px;width:300px;height:2px;background:#000;"></div>
<div class="r" style="left:28px;top:196.5px;width:2px;height:5px;background:#000;"></div>
<div class="r" style="left:142px;top:196.5px;width:2px;height:5px;background:#000;"></div>
<div class="r" style="left:256px;top:196.5px;width:2px;height:5px;background:#000;"></div>
<div class="r" style="left:68px;top:135px;width:36px;height:60px;background:linear-gradient(180deg,#0aa3e6 0px,#178fd0 7px,#1b3b61 27px,#1b3b61 100%);box-shadow:4px 0 5px rgba(0,0,0,.4);"></div>
<div class="r" style="left:181px;top:121px;width:36px;height:74px;background:linear-gradient(180deg,#0aa3e6 0px,#178fd0 8px,#1b3b61 33px,#1b3b61 100%);box-shadow:4px 0 5px rgba(0,0,0,.4);"></div>
<div class="r" style="left:52px;top:113px;width:68px;height:16px;background:#fff;"></div>
<div class="t" style="left:54.02px;top:114.13px;height:15px;line-height:15px;font-size:11.5px;color:#404040;transform:scaleX(0.9538);transform-origin:50% 50%;">$864,218.00</div>
<div class="r" style="left:160px;top:100px;width:78px;height:16px;background:#fff;"></div>
<div class="t" style="left:162.23px;top:100.63px;height:15px;line-height:15px;font-size:11.5px;color:#404040;transform:scaleX(0.9654);transform-origin:50% 50%;">$1,046,910.00</div>
<div class="t" style="left:68.72px;top:204.13px;height:15px;line-height:15px;font-size:11.3px;color:#595959;transform:scaleX(0.9117);transform-origin:50% 50%;">Jan-25</div>
<div class="t" style="left:181.40px;top:204.13px;height:15px;line-height:15px;font-size:11.3px;color:#595959;transform:scaleX(0.9356);transform-origin:50% 50%;">Feb-25</div>
<div class="t" style="left:1.00px;top:257.36px;height:18px;line-height:18px;font-size:14.2px;color:#000;transform:scaleX(0.8886);transform-origin:0 50%;">Hierarchy:</div>
<div class="r" style="left:0px;top:276px;width:115px;height:23px;background:#fff;border:1px solid #8a8a8a;box-shadow:inset 1px 1px 0 #d0d0d0;"></div>
<div class="r" style="left:97px;top:278px;width:17px;height:20px;background:#f0f0f0;border-top:1px solid #fff;border-left:1px solid #fff;border-right:2px solid #7a7a7a;border-bottom:2px solid #7a7a7a;"></div>
<svg style="left:101.0px;top:285.0px" width="8" height="5"><polygon points="0,0.3 7.4,0.3 3.7,4.3" fill="#000"/></svg>
<div class="t" style="left:45.41px;top:280.05px;height:17px;line-height:17px;font-size:13.3px;color:#101020;transform:scaleX(1.0486);transform-origin:50% 50%;">All</div>
<svg style="left:0;top:0" width="10" height="10"><g filter="url(#shc)"><path d="M138.15 274.33 A12.2 12.2 0 1 1 128.83 277.72" fill="none" stroke="#000" stroke-width="2.0"/><polygon points="124.97,276.15 130.94,281.16 132.12,272.76" fill="#000"/></g><defs><filter id="shc" x="-40%" y="-40%" width="200%" height="200%"><feDropShadow dx="2" dy="2.5" stdDeviation="1.6" flood-color="#000" flood-opacity="0.4"/></filter></defs></svg>
<div class="t" style="left:184.00px;top:279.01px;height:24px;line-height:24px;font-size:18.2px;color:#000;transform:scaleX(1.1796);transform-origin:0 50%;-webkit-text-stroke:0.8px #000;text-shadow:0.6px 0.6px 1px rgba(0,0,0,.45);">POS O</div>
<div class="r" style="left:0px;top:311px;width:462px;height:1px;background:#bdbdbd;"></div>
<div class="r" style="left:66px;top:312px;width:1px;height:20px;background:#bdbdbd;"></div>
<div class="r" style="left:172px;top:312px;width:1px;height:20px;background:#bdbdbd;"></div>
<div class="r" style="left:278px;top:312px;width:1px;height:20px;background:#bdbdbd;"></div>
<div class="r" style="left:384px;top:312px;width:1px;height:20px;background:#bdbdbd;"></div>
<div class="t" style="left:-13.37px;top:315.04px;height:16px;line-height:16px;font-size:12.3px;color:#202020;transform:scaleX(0.9077);transform-origin:50% 50%;">December</div>
<div class="t" style="left:97.92px;top:315.04px;height:16px;line-height:16px;font-size:12.3px;color:#202020;transform:scaleX(0.9049);transform-origin:50% 50%;">January</div>
<div class="t" style="left:200.89px;top:315.04px;height:16px;line-height:16px;font-size:12.3px;color:#202020;transform:scaleX(0.9386);transform-origin:50% 50%;">February</div>
<div class="t" style="left:314.41px;top:315.04px;height:16px;line-height:16px;font-size:12.3px;color:#202020;transform:scaleX(0.9656);transform-origin:50% 50%;">March</div>
<div class="t" style="left:425.20px;top:315.04px;height:16px;line-height:16px;font-size:12.3px;color:#202020;transform:scaleX(0.9753);transform-origin:50% 50%;">April</div>
</div>
<div class="r" style="left:1190px;top:418px;width:230px;height:324px;background:#f0f0f0;border-radius:9px;box-shadow:0 2px 18px 4px rgba(0,0,0,.38),0 0 0 0.5px rgba(0,0,0,.3);overflow:hidden;">
<div class="r" style="left:0px;top:0px;width:230px;height:30px;background:#f5f5f8;"></div>
<div class="t" style="left:8.00px;top:7.14px;height:16px;line-height:16px;font-size:12.3px;color:#1a1a1a;transform:scaleX(0.9611);transform-origin:0 50%;">Data Source Management</div>
<div class="t" style="left:12.00px;top:41.15px;height:17px;line-height:17px;font-size:13px;color:#0e0e92;transform:scaleX(0.9695);transform-origin:0 50%;">Acces Database Folder:</div>
<div class="r" style="left:12px;top:60px;width:220px;height:64px;background:#f0f0f0;border:1px solid #a2a2a2;"></div>
<div class="t" style="left:17.20px;top:66.15px;height:17px;line-height:17px;font-size:13px;color:#10101c;transform:scaleX(0.9895);transform-origin:0 50%;">C:\Users\Client\Desktop\Sales</div>
<div class="t" style="left:17.20px;top:82.15px;height:17px;line-height:17px;font-size:13px;color:#10101c;transform:scaleX(0.9493);transform-origin:0 50%;">Databases</div>
<div class="t" style="left:14.00px;top:135.15px;height:17px;line-height:17px;font-size:13px;color:#0e0e92;transform:scaleX(0.9712);transform-origin:0 50%;">Excel Files Download Folder:</div>
<div class="r" style="left:12px;top:154px;width:220px;height:64px;background:#f0f0f0;border:1px solid #a2a2a2;"></div>
<div class="t" style="left:19.00px;top:160.15px;height:17px;line-height:17px;font-size:13px;color:#10101c;transform:scaleX(0.9943);transform-origin:0 50%;">C:\Users\Client\Desktop\Excel Files</div>
<div class="t" style="left:13.00px;top:230.15px;height:17px;line-height:17px;font-size:13px;color:#0e0e92;transform:scaleX(0.9913);transform-origin:0 50%;">Text Files Download Folder:</div>
<div class="r" style="left:11px;top:249px;width:220px;height:63px;background:#f0f0f0;border:1px solid #a2a2a2;"></div>
<div class="t" style="left:18.00px;top:255.15px;height:17px;line-height:17px;font-size:13px;color:#10101c;transform:scaleX(0.9943);transform-origin:0 50%;">C:\Users\Client\Desktop\Excel Files</div>
</div>
</body></html>
